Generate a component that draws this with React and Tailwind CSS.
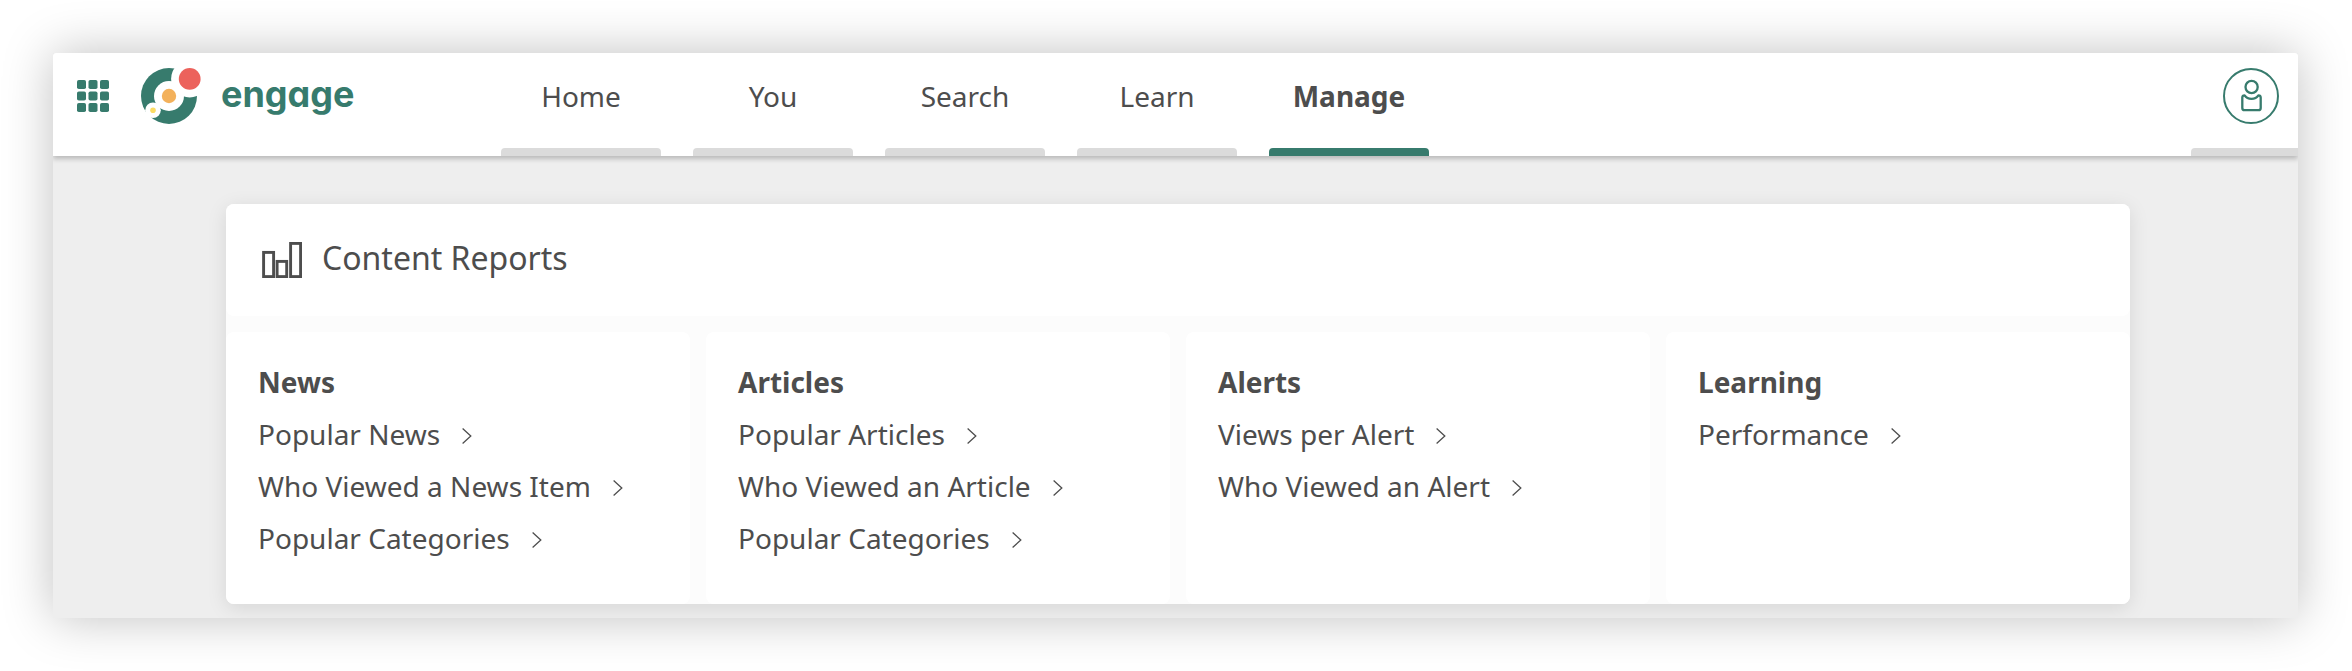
import React, { useState } from 'react';

const TABS = ['Home', 'You', 'Search', 'Learn', 'Manage'];

const REPORTS = [
  { title: 'News', links: ['Popular News', 'Who Viewed a News Item', 'Popular Categories'] },
  { title: 'Articles', links: ['Popular Articles', 'Who Viewed an Article', 'Popular Categories'] },
  { title: 'Alerts', links: ['Views per Alert', 'Who Viewed an Alert'] },
  { title: 'Learning', links: ['Performance'] },
];

const GRID_STEPS = [0, 11.5, 23];

const AppsIcon = () => (
  <svg viewBox="0 0 32 32" className="w-8 h-8" fill="#377b6d" aria-hidden="true">
    {GRID_STEPS.map((y) =>
      GRID_STEPS.map((x) => <rect key={`${x}-${y}`} x={x} y={y} width="9" height="9" rx="1.8" />)
    )}
  </svg>
);

const LogoMark = () => (
  <svg viewBox="0 0 60 56" className="w-[60px] h-14" aria-hidden="true">
    <circle cx="28" cy="28" r="28" fill="#377b6d" />
    <circle cx="28" cy="28" r="15" fill="#fff" />
    <circle cx="48.7" cy="10.9" r="18.6" fill="#fff" />
    <circle cx="12" cy="42.2" r="7.8" fill="#fff" />
    <circle cx="28" cy="28" r="7.2" fill="#f3b15b" />
    <circle cx="48.7" cy="10.9" r="10.9" fill="#ec625c" />
    <circle cx="12" cy="42.2" r="2.8" fill="#fbdc65" />
  </svg>
);

const UserIcon = () => (
  <svg viewBox="0 0 56 56" className="w-14 h-14" fill="none" stroke="#377b6d" strokeWidth="2" aria-hidden="true">
    <circle cx="28" cy="28" r="27" />
    <g strokeWidth="2.3">
      <circle cx="28.6" cy="19" r="6.1" />
      <path
        strokeLinejoin="round"
        d="M21.6 27.4c1.5 2.2 4 3.4 6.9 3.4s5.4-1.2 6.9-3.4c1.3 0 2.3.8 2.3 2.2v10.3a2.2 2.2 0 0 1-2.2 2.2h-14a2.2 2.2 0 0 1-2.2-2.2V29.6c0-1.4 1-2.2 2.3-2.2z"
      />
    </g>
  </svg>
);

const ChartIcon = () => (
  <svg viewBox="0 0 40 36" className="w-10 h-9" fill="none" stroke="#4d4d4d" strokeWidth="2.9" aria-hidden="true">
    <rect x="1.6" y="10.4" width="10" height="24.2" />
    <rect x="15.1" y="19.4" width="9.6" height="15.2" />
    <rect x="28.6" y="1.4" width="10" height="33.2" />
  </svg>
);

const Chevron = () => (
  <svg viewBox="0 0 10 16" className="w-[10px] h-4 mt-1" fill="none" stroke="#4d4d4d" strokeWidth="1.3" aria-hidden="true">
    <path d="M.6.5 8.8 8 .6 15.5" />
  </svg>
);

const Header = () => {
  const [active, setActive] = useState('Manage');

  return (
    <header className="relative flex h-[103px] bg-white rounded-t-[3px] shadow-[0_3px_5px_rgba(0,0,0,0.22)] [clip-path:inset(0_0_-12px_0)]">
      <div className="flex items-center w-[448px] h-[86px] pl-6 gap-8 shrink-0">
        <button type="button" aria-label="Apps">
          <AppsIcon />
        </button>
        <a href="#home" className="flex items-center gap-5">
          <LogoMark />
          <span className="pb-1 font-[family-name:Inter] text-[36px] leading-[44px] font-bold text-[#377b6d] [font-feature-settings:'cv11'_1]">
            engage
          </span>
        </a>
      </div>

      <nav className="flex gap-8">
        {TABS.map((tab) => (
          <a
            key={tab}
            href={`#${tab.toLowerCase()}`}
            onClick={() => setActive(tab)}
            className={`flex flex-col justify-between w-40 text-center leading-[86px] ${active === tab ? 'font-bold' : ''}`}
          >
            {tab}
            <span className={`h-2 rounded-t-[4px] ${active === tab ? 'bg-[#377b6d]' : 'bg-[#dbdbdb]'}`} />
          </a>
        ))}
      </nav>

      <button type="button" aria-label="Profile" className="flex flex-col justify-between w-[107px] ml-auto">
        <span className="flex items-center h-[86px] pl-8">
          <UserIcon />
        </span>
        <span className="w-full h-2 rounded-tl-[4px] bg-[#dbdbdb]" />
      </button>
    </header>
  );
};

const ReportColumn = ({ title, links }) => (
  <div className="px-8 pt-6 pb-10 bg-white rounded-lg leading-[52px]">
    <h2 className="font-bold">{title}</h2>
    <ul>
      {links.map((link) => (
        <li key={link}>
          <a href="#report" className="inline-flex items-center gap-[22px] align-top">
            {link}
            <Chevron />
          </a>
        </li>
      ))}
    </ul>
  </div>
);

const App = () => (
  <div className="p-[53px] pr-[54px] bg-white font-['Noto_Sans',sans-serif] text-[28px] text-[#4d4d4d]">
    <div className="bg-[#eeeeee] rounded-t-[3px] shadow-[0_0_50px_rgba(0,0,0,0.25)]">
      <Header />
      <main className="pt-12 pb-[14px] pl-[173px] pr-[168px] overflow-hidden">
        <section className="bg-[#fcfcfc] rounded-lg shadow-[0_4px_20px_rgba(0,0,0,0.1)]">
          <div className="flex items-center gap-5 h-28 pl-9 bg-white rounded-lg">
            <ChartIcon />
            <h1 className="text-[32px] leading-[44px] pb-1">Content Reports</h1>
          </div>
          <div className="grid grid-cols-4 gap-4 mt-4">
            {REPORTS.map((group) => (
              <ReportColumn key={group.title} {...group} />
            ))}
          </div>
        </section>
      </main>
    </div>
  </div>
);

export default App;
